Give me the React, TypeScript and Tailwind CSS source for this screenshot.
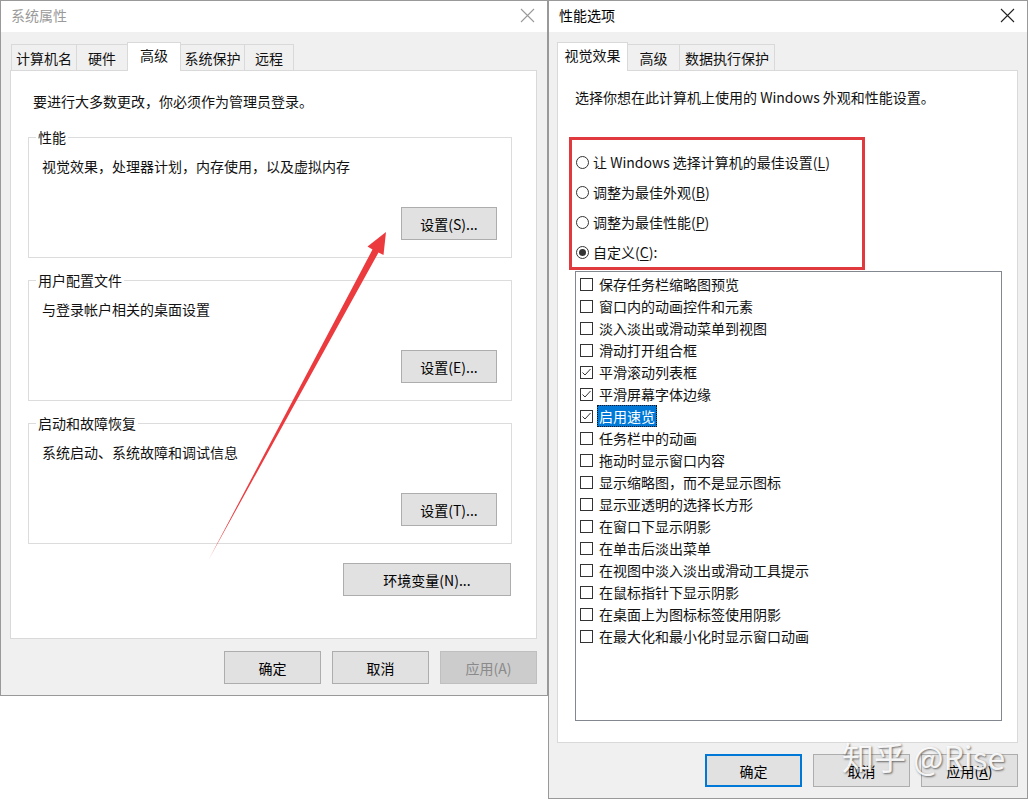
import type { ReactNode } from "react";

const font = "font-['Noto_Sans_CJK_SC','Noto_Sans',sans-serif]";

const effects: { label: string; checked: boolean; focused?: boolean }[] = [
  { label: "保存任务栏缩略图预览", checked: false },
  { label: "窗口内的动画控件和元素", checked: false },
  { label: "淡入淡出或滑动菜单到视图", checked: false },
  { label: "滑动打开组合框", checked: false },
  { label: "平滑滚动列表框", checked: true },
  { label: "平滑屏幕字体边缘", checked: true },
  { label: "启用速览", checked: true, focused: true },
  { label: "任务栏中的动画", checked: false },
  { label: "拖动时显示窗口内容", checked: false },
  { label: "显示缩略图，而不是显示图标", checked: false },
  { label: "显示亚透明的选择长方形", checked: false },
  { label: "在窗口下显示阴影", checked: false },
  { label: "在单击后淡出菜单", checked: false },
  { label: "在视图中淡入淡出或滑动工具提示", checked: false },
  { label: "在鼠标指针下显示阴影", checked: false },
  { label: "在桌面上为图标标签使用阴影", checked: false },
  { label: "在最大化和最小化时显示窗口动画", checked: false },
];

function CloseIcon({ color }: { color: string }) {
  return (
    <svg width="15" height="15" viewBox="0 0 15 15">
      <path d="M1 1 L14 14 M14 1 L1 14" stroke={color} strokeWidth="1.1" />
    </svg>
  );
}

function TitleBar({ title, inactive }: { title: string; inactive?: boolean }) {
  return (
    <div className="flex h-[31px] items-center justify-between bg-white pb-[2px] pl-[10px] pr-[12px]">
      <span className={`text-[14px] ${inactive ? "text-[#9a9a9a]" : "text-black"}`}>{title}</span>
      <CloseIcon color={inactive ? "#9a9a9a" : "#222"} />
    </div>
  );
}

function Tab({ label, active, className }: { label: string; active?: boolean; className: string }) {
  return (
    <div
      className={`flex items-center justify-center border border-b-0 border-[#d9d9d9] text-[14px] leading-[20px] ${
        active ? "relative z-10 -mb-px h-[29px] bg-white pb-[4px]" : "-ml-px h-[26px] bg-[#f0f0f0] first:ml-0"
      } ${className}`}
    >
      {label}
    </div>
  );
}

function Button({
  children,
  className,
  disabled,
  focused,
}: {
  children: ReactNode;
  className: string;
  disabled?: boolean;
  focused?: boolean;
}) {
  return (
    <div
      className={`flex h-[33px] items-center justify-center text-[14px] leading-[20px] ${
        disabled
          ? "border border-[#bfbfbf] bg-[#cccccc] text-[#8a8a8a]"
          : focused
            ? "border-2 border-[#0078d7] bg-[#e1e1e1] text-black"
            : "border border-[#adadad] bg-[#e1e1e1] text-black"
      } ${className}`}
    >
      {children}
    </div>
  );
}

function GroupBox({ title, text, button }: { title: string; text: string; button: string }) {
  return (
    <div className="flex h-[121px] w-[484px] flex-col border border-[#dcdcdc]">
      <div className="-mt-[11px] ml-[7px] w-fit bg-white px-[2px] text-[14px] leading-[20px]">{title}</div>
      <div className="ml-[13px] mt-[9px] text-[14px] leading-[20px]">{text}</div>
      <Button className="mb-[17px] mr-[14px] mt-auto w-[96px] self-end">{button}</Button>
    </div>
  );
}

function SystemProperties() {
  return (
    <div className="flex h-[696px] w-[548px] shrink-0 flex-col border border-[#999] bg-[#f0f0f0]">
      <TitleBar title="系统属性" inactive />
      <div className="flex items-end pl-[10px] pt-[10px]">
        <Tab label="计算机名" className="w-[66px]" />
        <Tab label="硬件" className="w-[52px]" />
        <Tab label="高级" active className="-ml-px w-[54px]" />
        <Tab label="系统保护" className="w-[65px]" />
        <Tab label="远程" className="w-[50px]" />
      </div>
      <div className="ml-[9px] flex h-[569px] w-[527px] flex-col border border-[#d9d9d9] bg-white pl-[17px] pt-[20px]">
        <div className="ml-[5px] text-[14px] leading-[20px]">要进行大多数更改，你必须作为管理员登录。</div>
        <div className="mt-[26px] flex flex-col gap-[22px]">
          <GroupBox title="性能" text="视觉效果，处理器计划，内存使用，以及虚拟内存" button="设置(S)..." />
          <GroupBox title="用户配置文件" text="与登录帐户相关的桌面设置" button="设置(E)..." />
          <GroupBox title="启动和故障恢复" text="系统启动、系统故障和调试信息" button="设置(T)..." />
        </div>
        <Button className="ml-[315px] mt-[19px] w-[168px]">环境变量(N)...</Button>
      </div>
      <div className="mr-[10px] mt-[12px] flex justify-end gap-[11px]">
        <Button className="w-[97px]">确定</Button>
        <Button className="w-[97px]">取消</Button>
        <Button className="w-[97px]" disabled>
          应用(A)
        </Button>
      </div>
    </div>
  );
}

function Radio({ checked }: { checked?: boolean }) {
  return (
    <span className="flex h-[13px] w-[13px] shrink-0 items-center justify-center rounded-full border border-[#333] bg-white">
      {checked && <span className="h-[7px] w-[7px] rounded-full bg-[#333]" />}
    </span>
  );
}

function Checkbox({ checked }: { checked: boolean }) {
  return (
    <span className="flex h-[13px] w-[13px] shrink-0 items-center justify-center border border-[#333] bg-white">
      {checked && (
        <svg width="11" height="11" viewBox="0 0 11 11">
          <path d="M1.5 5.5 L4 8 L9.5 2" stroke="#333" strokeWidth="1" fill="none" />
        </svg>
      )}
    </span>
  );
}

function PerformanceOptions() {
  const radios: { label: string; key: string; rest: string; checked?: boolean }[] = [
    { label: "让 Windows 选择计算机的最佳设置(", key: "L", rest: ")" },
    { label: "调整为最佳外观(", key: "B", rest: ")" },
    { label: "调整为最佳性能(", key: "P", rest: ")" },
    { label: "自定义(", key: "C", rest: "):", checked: true },
  ];

  return (
    <div className="flex h-[799px] w-[480px] shrink-0 flex-col border border-[#999] bg-[#f0f0f0]">
      <TitleBar title="性能选项" />
      <div className="flex items-end pl-[8px] pt-[10px]">
        <Tab label="视觉效果" active className="w-[71px]" />
        <Tab label="高级" className="w-[53px]" />
        <Tab label="数据执行保护" className="w-[96px]" />
      </div>
      <div className="ml-[8px] flex h-[673px] w-[461px] flex-col border border-[#d9d9d9] bg-white pl-[17px] pt-[16px]">
        <div className="text-[14px] leading-[20px]">选择你想在此计算机上使用的 Windows 外观和性能设置。</div>
        <div className="-ml-[6px] mt-[30px] h-[133px] w-[296px] border-[3px] border-[#e0393e] pl-[4px] pt-[7px]">
          {radios.map((r) => (
            <div key={r.key} className="flex h-[30px] items-center gap-[4px] text-[14px] leading-[20px]">
              <Radio checked={r.checked} />
              <span>
                {r.label}
                <span className="underline underline-offset-2">{r.key}</span>
                {r.rest}
              </span>
            </div>
          ))}
        </div>
        <div className="mt-px h-[450px] w-[427px] border border-[#828790] bg-white pl-[4px] pt-px">
          {effects.map((e) => (
            <div key={e.label} className="flex h-[22px] items-center gap-[4px] text-[14px] leading-[20px]">
              <Checkbox checked={e.checked} />
              <span
                className={
                  e.focused
                    ? "border border-dotted border-[#111] bg-[#0078d7] px-px text-white"
                    : "border border-transparent px-px"
                }
              >
                {e.label}
              </span>
            </div>
          ))}
        </div>
      </div>
      <div className="mr-[9px] mt-[11px] flex justify-end gap-[11px]">
        <Button className="w-[97px]" focused>
          确定
        </Button>
        <Button className="w-[97px]">取消</Button>
        <Button className="w-[97px]">
          <span>
            应用(<span className="underline underline-offset-2">A</span>)
          </span>
        </Button>
      </div>
    </div>
  );
}

function Arrow() {
  return (
    <svg className="pointer-events-none absolute left-0 top-0" width="1028" height="801" viewBox="0 0 1028 801">
      <polygon
        points="209,559 378.5,252.5 383.5,255 386,232 367.5,246.5 372.5,249.5"
        fill="#ec3b3f"
      />
    </svg>
  );
}

export default function App() {
  return (
    <div className={`relative flex h-[801px] w-[1028px] items-start overflow-hidden bg-white text-[#111] ${font}`}>
      <SystemProperties />
      <PerformanceOptions />
      <Arrow />
      <div className="pointer-events-none absolute left-[842px] top-[736px] whitespace-nowrap text-[32px] leading-[40px] text-white/90 [text-shadow:1px_1px_2px_rgba(0,0,0,0.55)]">
        知乎 @Rise
      </div>
    </div>
  );
}
